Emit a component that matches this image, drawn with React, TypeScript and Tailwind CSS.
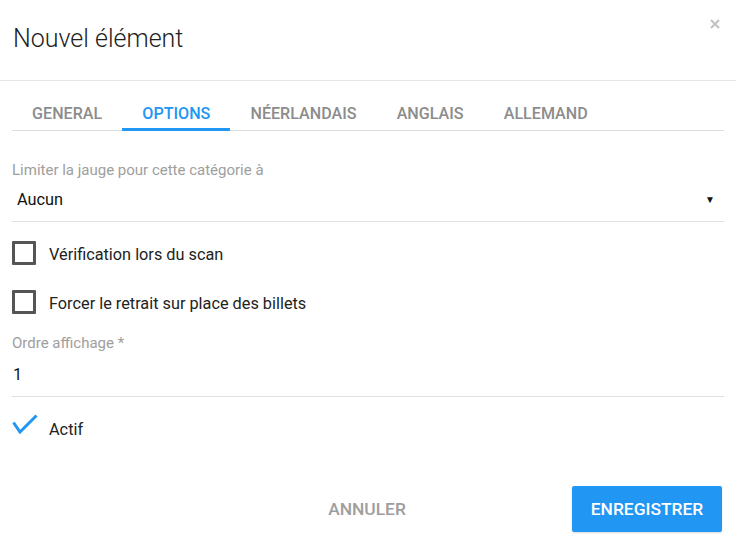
import { useState } from 'react'

const tabs = ['General', 'Options', 'Néerlandais', 'Anglais', 'Allemand']

function Checkbox({ label }: { label: string }) {
  return (
    <label className="flex items-center gap-[13px] h-[24px] cursor-pointer">
      <span className="w-[24px] h-[24px] border-[3px] border-[#555] rounded-[1px] shrink-0" />
      <span className="text-[16.3px] leading-[24px] text-[#222] pt-[3px]">{label}</span>
    </label>
  )
}

export default function App() {
  const [active, setActive] = useState(1)

  return (
    <div className="relative w-[736px] h-[549px] bg-white overflow-hidden font-['Roboto',sans-serif] text-[#212121]">
      {/* Header */}
      <div className="h-[81px] border-b border-[#e5e5e5] px-3 pt-[25px]">
        <h2 className="text-[25px] leading-[28px] font-light pl-[1px] text-[#222]">Nouvel élément</h2>
      </div>
      <button className="absolute top-[19px] right-[16px] w-[10px] h-[10px] text-[#c4c4c4]">
        <svg viewBox="0 0 10 10" className="w-[10px] h-[10px]">
          <path d="M1 1 L9 9 M9 1 L1 9" stroke="currentColor" strokeWidth="2.2" />
        </svg>
      </button>

      {/* Tabs */}
      <div className="mx-3 flex border-b border-[#dcdcdc]">
        {tabs.map((t, i) => (
          <button
            key={t}
            onClick={() => setActive(i)}
            className={`px-[20.1px] pt-[23px] pb-[4px] border-b-[3px] -mb-px text-[16.1px] leading-[20px] font-medium uppercase ${
              i === active ? 'text-[#2196f3] border-[#2196f3]' : 'text-[#8c8c8c] border-transparent'
            }`}
          >
            {t}
          </button>
        ))}
      </div>

      {/* Body */}
      <div className="px-3">
        <div className="mt-[29px]">
          <div className="text-[15px] leading-[20px] text-[#9e9e9e]">Limiter la jauge pour cette catégorie à</div>
          <div className="flex items-center justify-between pl-[5px] pr-[9px] pt-[8px] pb-[9px] border-b border-[#e0e0e0]">
            <span className="text-[16.3px] leading-[24px] text-[#111]">Aucun</span>
            <span className="text-[10px] leading-[10px] text-[#111]">▼</span>
          </div>
        </div>

        <div className="mt-[19px] flex flex-col gap-[25px]">
          <Checkbox label="Vérification lors du scan" />
          <Checkbox label="Forcer le retrait sur place des billets" />
        </div>

        <div className="mt-[19px]">
          <div className="text-[15px] leading-[20px] text-[#9e9e9e]">Ordre affichage *</div>
          <div className="pl-[1px] pt-[10px] pb-[9px] border-b border-[#e0e0e0]">
            <span className="text-[16.3px] leading-[24px] text-[#111]">1</span>
          </div>
        </div>

        <div className="mt-[17px] flex items-start gap-[11px]">
          <svg width="26" height="20" viewBox="0 0 26 20" className="shrink-0">
            <polyline points="1.5,8.5 8,18 24.5,1.5" fill="none" stroke="#2196f3" strokeWidth="3" />
          </svg>
          <span className="text-[16.3px] leading-[24px] text-[#222] mt-[4px]">Actif</span>
        </div>
      </div>

      {/* Footer */}
      <div className="mt-[44px] flex justify-end pr-[14px]">
        <button className="w-[150px] h-[46px] mr-[130px] text-[17.4px] font-medium uppercase text-[#9e9e9e]">
          Annuler
        </button>
        <button className="w-[150px] h-[46px] rounded-[2px] bg-[#2196f3] text-white text-[17.4px] font-medium uppercase shadow-[0_1px_2px_rgba(0,0,0,0.15)]">
          Enregistrer
        </button>
      </div>
    </div>
  )
}
